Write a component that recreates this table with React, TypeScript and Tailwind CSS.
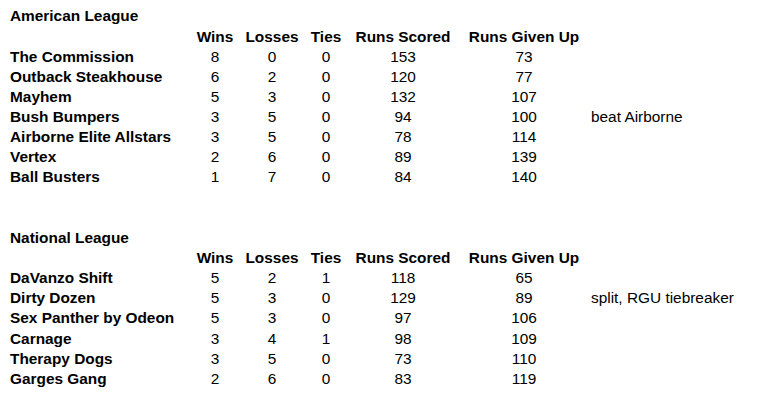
import React from 'react';

type Team = { name: string; w: number; l: number; t: number; rs: number; rgu: number; note?: string };

const leagues: { title: string; teams: Team[] }[] = [
  {
    title: 'American League',
    teams: [
      { name: 'The Commission', w: 8, l: 0, t: 0, rs: 153, rgu: 73 },
      { name: 'Outback Steakhouse', w: 6, l: 2, t: 0, rs: 120, rgu: 77 },
      { name: 'Mayhem', w: 5, l: 3, t: 0, rs: 132, rgu: 107 },
      { name: 'Bush Bumpers', w: 3, l: 5, t: 0, rs: 94, rgu: 100, note: 'beat Airborne' },
      { name: 'Airborne Elite Allstars', w: 3, l: 5, t: 0, rs: 78, rgu: 114 },
      { name: 'Vertex', w: 2, l: 6, t: 0, rs: 89, rgu: 139 },
      { name: 'Ball Busters', w: 1, l: 7, t: 0, rs: 84, rgu: 140 }
    ]
  },
  {
    title: 'National League',
    teams: [
      { name: 'DaVanzo Shift', w: 5, l: 2, t: 1, rs: 118, rgu: 65 },
      { name: 'Dirty Dozen', w: 5, l: 3, t: 0, rs: 129, rgu: 89, note: 'split, RGU tiebreaker' },
      { name: 'Sex Panther by Odeon', w: 5, l: 3, t: 0, rs: 97, rgu: 106 },
      { name: 'Carnage', w: 3, l: 4, t: 1, rs: 98, rgu: 109 },
      { name: 'Therapy Dogs', w: 3, l: 5, t: 0, rs: 73, rgu: 110 },
      { name: 'Garges Gang', w: 2, l: 6, t: 0, rs: 83, rgu: 119 }
    ]
  }
];

const row = 'grid grid-cols-[190px_50px_64px_44px_110px_132px_1fr] h-[20.15px] items-center whitespace-nowrap';

export default function App() {
  return (
    <div className="min-h-[400px] w-[759px] bg-white text-black text-[15.4px] leading-none pt-[6px]" style={{ fontFamily: '"Liberation Sans", Arial, sans-serif' }}>
      {leagues.map((league, li) => (
        <div key={li}>
          {/* League title */}
          <div className={row}>
            <div className="pl-[10px] font-bold">{league.title}</div>
          </div>

          {/* Column headers */}
          <div className={`${row} font-bold`}>
            <div />
            <div className="text-center">Wins</div>
            <div className="text-center">Losses</div>
            <div className="text-center">Ties</div>
            <div className="text-center">Runs Scored</div>
            <div className="text-center">Runs Given Up</div>
            <div />
          </div>

          {league.teams.map((team, ti) => (
            <div key={ti} className={row}>
              <div className="pl-[10px] font-bold">{team.name}</div>
              <div className="text-center">{team.w}</div>
              <div className="text-center">{team.l}</div>
              <div className="text-center">{team.t}</div>
              <div className="text-center">{team.rs}</div>
              <div className="text-center">{team.rgu}</div>
              <div className="pl-[1px]">{team.note}</div>
            </div>
          ))}

          {li === 0 && (
            <>
              <div className="h-[20.15px]" />
              <div className="h-[20.15px]" />
            </>
          )}
        </div>
      ))}
    </div>
  );
}
